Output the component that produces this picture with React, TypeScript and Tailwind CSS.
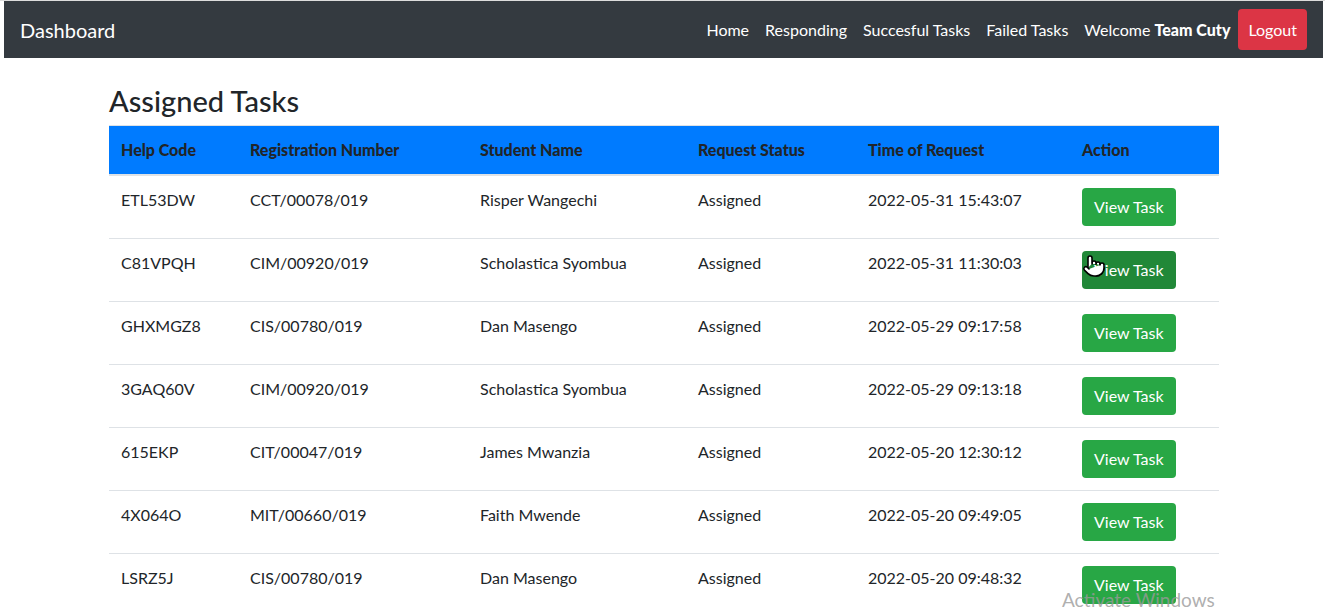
import { Pointer } from 'lucide-react'

const rows = [
  { code: 'ETL53DW', reg: 'CCT/00078/019', name: 'Risper Wangechi', time: '2022-05-31 15:43:07' },
  { code: 'C81VPQH', reg: 'CIM/00920/019', name: 'Scholastica Syombua', time: '2022-05-31 11:30:03' },
  { code: 'GHXMGZ8', reg: 'CIS/00780/019', name: 'Dan Masengo', time: '2022-05-29 09:17:58' },
  { code: '3GAQ60V', reg: 'CIM/00920/019', name: 'Scholastica Syombua', time: '2022-05-29 09:13:18' },
  { code: '615EKP', reg: 'CIT/00047/019', name: 'James Mwanzia', time: '2022-05-20 12:30:12' },
  { code: '4X064O', reg: 'MIT/00660/019', name: 'Faith Mwende', time: '2022-05-20 09:49:05' },
  { code: 'LSRZ5J', reg: 'CIS/00780/019', name: 'Dan Masengo', time: '2022-05-20 09:48:32' },
]

const links = ['Home', 'Responding', 'Succesful Tasks', 'Failed Tasks']

export default function App() {
  return (
    <div className="relative min-h-[609px] bg-white font-['Lato',sans-serif] text-[16px] text-[#212529]">
      <div className="h-px bg-[#dcdcdc]" />
      <nav className="ml-[4px] mr-[2px] flex h-[57px] items-center justify-between bg-[#343a40] px-4">
        <span className="text-[20px] leading-[30px] text-white">Dashboard</span>
        <div className="flex items-center">
          {links.map(link => (
            <a key={link} className="px-2 leading-6 text-white">{link}</a>
          ))}
          <span className="px-2 leading-6 text-white">
            Welcome <b className="font-black">Team Cuty</b>
          </span>
          <button type="button" className="flex h-[41px] items-center rounded-[4px] bg-[#dc3545] px-[10px] text-white">
            Logout
          </button>
        </div>
      </nav>

      <div className="ml-[94px] w-[1140px] px-[15px]">
        <h3 className="mt-[26px] mb-[6px] text-[29px] leading-[1.2] font-medium">Assigned Tasks</h3>
        <table className="w-full border-collapse text-left">
          <thead>
            <tr className="bg-[#007bff]">
              <th className="w-[129px] border-t border-b-2 border-[#dee2e6] px-3 py-3 leading-6 font-black">Help Code</th>
              <th className="w-[230px] border-t border-b-2 border-[#dee2e6] px-3 py-3 leading-6 font-black">Registration Number</th>
              <th className="w-[218px] border-t border-b-2 border-[#dee2e6] px-3 py-3 leading-6 font-black">Student Name</th>
              <th className="w-[170px] border-t border-b-2 border-[#dee2e6] px-3 py-3 leading-6 font-black">Request Status</th>
              <th className="w-[214px] border-t border-b-2 border-[#dee2e6] px-3 py-3 leading-6 font-black">Time of Request</th>
              <th className="border-t border-b-2 border-[#dee2e6] px-3 py-3 leading-6 font-black">Action</th>
            </tr>
          </thead>
          <tbody>
            {rows.map((row, i) => (
              <tr key={row.code} className="border-t border-[#dee2e6] align-top">
                <td className="px-3 py-3 leading-6">{row.code}</td>
                <td className="px-3 py-3 leading-6">{row.reg}</td>
                <td className="px-3 py-3 leading-6">{row.name}</td>
                <td className="px-3 py-3 leading-6">Assigned</td>
                <td className="px-3 py-3 leading-6">{row.time}</td>
                <td className="px-3 py-3 leading-6">
                  <button
                    type="button"
                    className={
                      i === 1
                        ? 'h-[38px] rounded-[4px] bg-[#218838] px-3 text-white'
                        : 'h-[38px] rounded-[4px] bg-[#28a745] px-3 text-white'
                    }
                  >
                    View Task
                  </button>
                </td>
              </tr>
            ))}
          </tbody>
        </table>
      </div>

      {/* mouse cursor hovering the second button */}
      <Pointer
        className="absolute left-[1082px] top-[254px] h-[24px] w-[24px] text-black"
        fill="white"
        strokeWidth={1.6}
      />
      {/* OS watermark */}
      <span className="pointer-events-none absolute left-[1062px] top-[588px] text-[19px] leading-6 text-[#9a9a9a]/80">
        Activate Windows
      </span>
    </div>
  )
}
